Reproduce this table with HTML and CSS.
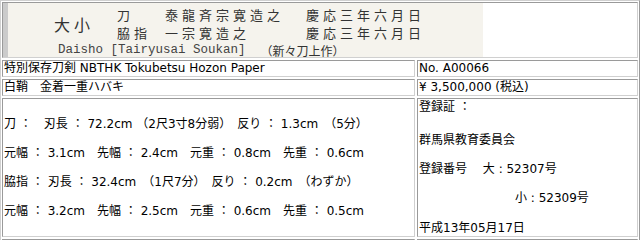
FILE: index.html
```html
<!DOCTYPE html>
<html lang="ja">
<head>
<meta charset="utf-8">
<title>大小 泰龍斉宗寛</title>
<link rel="stylesheet" href="styles.css">
</head>
<body>
<div class="sheet">
  <div class="cell head">
    <div class="banner">
      <div class="b-size">大小</div>
      <div class="b-type r1">刀</div>
      <div class="b-smith r1">泰龍斉宗寛造之</div>
      <div class="b-date r1">慶応三年六月日</div>
      <div class="b-type r2">脇指</div>
      <div class="b-smith r2">一宗寛造之</div>
      <div class="b-date r2">慶応三年六月日</div>
      <div class="b-romaji"><span class="mono">Daisho [Tairyusai Soukan]</span><span class="grade">（新々刀上作）</span></div>
    </div>
  </div>
  <div class="cell">特別保存刀剣 NBTHK Tokubetsu Hozon Paper</div>
  <div class="cell">No. A00066</div>
  <div class="cell">白鞘　金着一重ハバキ</div>
  <div class="cell">¥ 3,500,000 (税込)</div>
  <div class="cell specs">
    <div class="line">刀 ：　刃長 ： 72.2cm （2尺3寸8分弱）　反り ： 1.3cm　（5分）</div>
    <div class="line">元幅 ： 3.1cm　先幅 ： 2.4cm　元重 ： 0.8cm　先重 ： 0.6cm</div>
    <div class="line">脇指 ： 刃長 ： 32.4cm　（1尺7分）　反り ： 0.2cm　（わずか）</div>
    <div class="line">元幅 ： 3.2cm　先幅 ： 2.5cm　元重 ： 0.6cm　先重 ： 0.5cm</div>
  </div>
  <div class="cell reg">
    <div class="rline first">登録証 ：</div>
    <div class="rline">群馬県教育委員会</div>
    <div class="rline">登録番号　 大 : 52307号</div>
    <div class="rline indent">小 : 52309号</div>
    <div class="rline last">平成13年05月17日</div>
  </div>
  <div class="cell tail"></div>
  <div class="cell tail"></div>
</div>
</body>
</html>
```
FILE: styles.css
```css
html, body {
  margin: 0;
  padding: 0;
  height: 240px;
  overflow: hidden;
  background: #fff;
}

body {
  font-family: "DejaVu Sans", "Noto Sans CJK JP", sans-serif;
  font-size: 12px;
  color: #000;
}

.sheet {
  width: 640px;
  box-sizing: border-box;
  border: 1px solid;
  border-color: #d0d0d0 #9a9a9a #9a9a9a #d0d0d0;
  padding: 1px 1px 0;
  display: grid;
  grid-template-columns: 413px 221px;
  gap: 2px;
}

.cell {
  border: 1px solid;
  border-color: #9a9a9a #d0d0d0 #d0d0d0 #9a9a9a;
  padding: 0 1px;
  line-height: 15px;
  white-space: nowrap;
  overflow: hidden;
}

.head {
  grid-column: 1 / -1;
  height: 54px;
  padding: 0;
}

.banner {
  width: 480px;
  height: 54px;
  box-sizing: border-box;
  border-left: 5px solid #cbcbcb;
  background: #f5f3ed;
  color: #333;
  padding: 4px 0 0 46px;
  display: grid;
  grid-template-columns: 63px 48px 141px auto;
  grid-template-rows: 16px 16px 15px;
  row-gap: 2px;
  font-family: "Noto Sans CJK JP", sans-serif;
}

.b-size {
  grid-column: 1;
  grid-row: 1 / 3;
  align-self: center;
  font-size: 16px;
  letter-spacing: 4px;
  line-height: 20px;
}

.r1 { grid-row: 1; }
.r2 { grid-row: 2; }

.b-type, .b-smith, .b-date {
  font-size: 13px;
  letter-spacing: 4px;
  line-height: 16px;
}

.b-type { grid-column: 2; }
.b-smith { grid-column: 3; }
.b-date { grid-column: 4; }

.b-romaji {
  grid-column: 1 / -1;
  grid-row: 3;
  padding-left: 4px;
  display: flex;
  align-items: center;
  gap: 15px;
  line-height: 15px;
}

.mono {
  font-family: "Liberation Mono", monospace;
  font-size: 12.5px;
  color: #444;
}

.grade {
  font-size: 12px;
  color: #333;
}

.specs {
  display: flex;
  flex-direction: column;
  justify-content: center;
}

.specs .line {
  line-height: 29px;
}

.reg {
  display: flex;
  flex-direction: column;
  gap: 14px;
  padding-top: 1px;
}

.rline.first {
  margin-bottom: 4px;
}

.rline.indent {
  padding-left: 96px;
}

.rline.last {
  margin-top: 1px;
}

.tail {
  height: 0;
  border-bottom: none;
}
```
